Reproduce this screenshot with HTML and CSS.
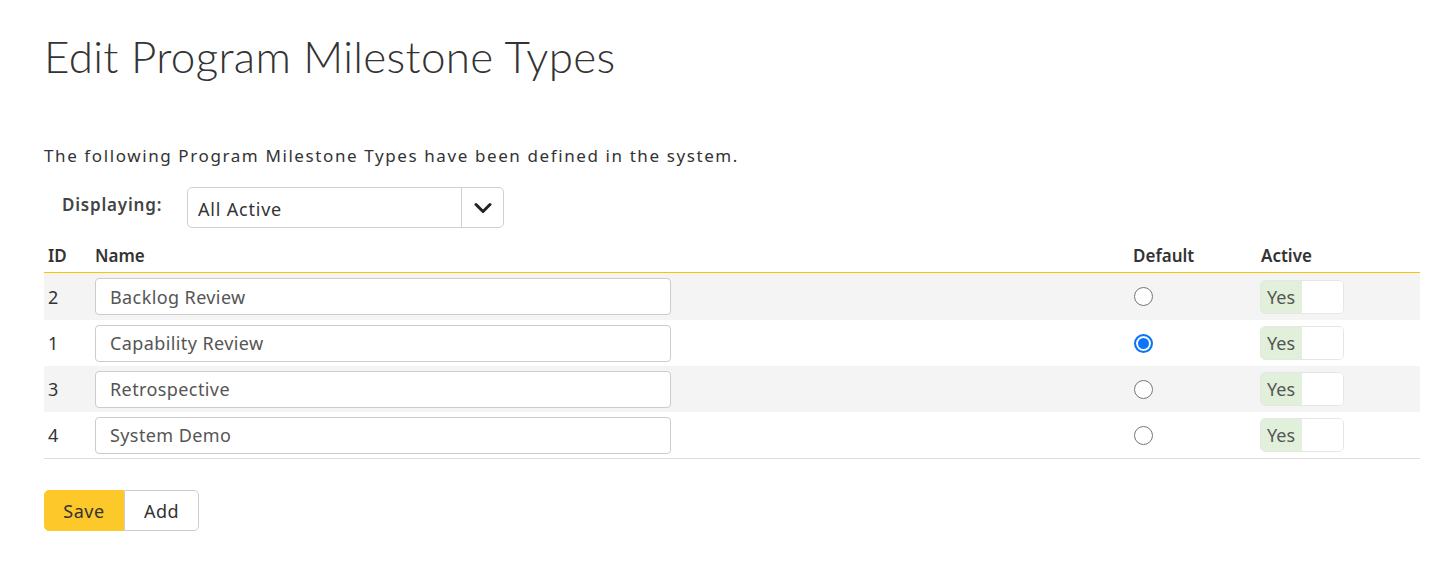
FILE: index.html
```html
<!DOCTYPE html>
<html>
<head>
<meta charset="utf-8">
<link rel="stylesheet" href="styles.css">
</head>
<body>
<div class="page">
  <h1 class="title">Edit Program Milestone Types</h1>
  <p class="intro">The following Program Milestone Types have been defined in the system.</p>
  <div class="filter">
    <label class="filter-label">Displaying:</label>
    <div class="select">
      <span class="select-value">All Active</span>
      <span class="select-btn">
        <svg width="18" height="12" viewBox="0 0 18 12"><path d="M2 2.5 L9 9.5 L16 2.5" fill="none" stroke="#222" stroke-width="3" stroke-linecap="round" stroke-linejoin="round"/></svg>
      </span>
    </div>
  </div>
  <table class="grid">
    <thead>
      <tr>
        <th class="c-id">ID</th>
        <th class="c-name">Name</th>
        <th class="c-def">Default</th>
        <th class="c-act">Active</th>
      </tr>
    </thead>
    <tbody>
      <tr class="alt">
        <td class="c-id">2</td>
        <td class="c-name"><input class="text" type="text" value="Backlog Review"></td>
        <td class="c-def"><span class="radio"></span></td>
        <td class="c-act"><span class="toggle"><span class="yes">Yes</span><span class="no"></span></span></td>
      </tr>
      <tr>
        <td class="c-id">1</td>
        <td class="c-name"><input class="text" type="text" value="Capability Review"></td>
        <td class="c-def"><span class="radio checked"></span></td>
        <td class="c-act"><span class="toggle"><span class="yes">Yes</span><span class="no"></span></span></td>
      </tr>
      <tr class="alt">
        <td class="c-id">3</td>
        <td class="c-name"><input class="text" type="text" value="Retrospective"></td>
        <td class="c-def"><span class="radio"></span></td>
        <td class="c-act"><span class="toggle"><span class="yes">Yes</span><span class="no"></span></span></td>
      </tr>
      <tr>
        <td class="c-id">4</td>
        <td class="c-name"><input class="text" type="text" value="System Demo"></td>
        <td class="c-def"><span class="radio"></span></td>
        <td class="c-act"><span class="toggle"><span class="yes">Yes</span><span class="no"></span></span></td>
      </tr>
    </tbody>
  </table>
  <div class="actions">
    <button class="btn btn-primary">Save</button><button class="btn">Add</button>
  </div>
</div>
</body>
</html>
```

FILE: styles.css
```css
* { box-sizing: border-box; }
html, body { margin: 0; padding: 0; background: #fff; }
body {
  font-family: "Noto Sans", "Open Sans", sans-serif;
  color: #333;
  font-size: 18px;
}
.page {
  padding: 28px 32px 0 44px;
}
.title {
  margin: 0;
  font-family: "Lato", "Liberation Sans", sans-serif;
  font-weight: 300;
  font-size: 44px;
  line-height: 56px;
  color: #333;
  letter-spacing: 0.3px;
}
.intro {
  margin: 60px 0 0 0;
  font-size: 17px;
  line-height: 24px;
  color: #333;
  letter-spacing: 1.6px;
}
.filter {
  display: flex;
  align-items: center;
  margin-top: 19px;
  padding-left: 18px;
}
.filter-label {
  font-size: 17px;
  font-weight: 600;
  color: #444;
  width: 125px;
  margin-top: -6px;
  letter-spacing: 0.8px;
}
.select {
  display: flex;
  width: 317px;
  height: 41px;
  border: 1px solid #d0d0d0;
  border-radius: 5px;
  align-items: stretch;
}
.select-value {
  flex: 1;
  padding: 9px 10px 0;
  font-size: 18px;
  color: #333;
  letter-spacing: 0.8px;
}
.select-btn {
  width: 42px;
  border-left: 1px solid #d0d0d0;
  display: flex;
  align-items: center;
  justify-content: center;
}
.grid {
  width: 1376px;
  border-collapse: separate;
  border-spacing: 0;
  margin-top: 10px;
}
.grid th {
  text-align: left;
  font-weight: 600;
  font-size: 17px;
  color: #333;
  height: 35px;
  padding: 0;
  border-bottom: 1px solid #f7c400;
  vertical-align: middle;
}
.grid td {
  height: 46px;
  padding: 0;
  vertical-align: middle;
  font-size: 18px;
  color: #333;
}
.grid tbody tr:first-child td { height: 47px; }
.grid tbody tr:last-child td { border-bottom: 1px solid #ddd; height: 47px; }
.grid tr.alt td { background: #f4f4f4; }
.c-id { width: 51px; padding-left: 4px !important; }
.c-name { width: 1038px; }
.c-def { width: 128px; }
.text {
  width: 576px;
  height: 37px;
  border: 1px solid #ccc;
  border-radius: 4px;
  padding: 0 14px;
  font-family: "Noto Sans", "Open Sans", sans-serif;
  font-size: 18px;
  color: #555;
  background: #fff;
  letter-spacing: 0.4px;
}
.radio {
  display: block;
  width: 19px;
  height: 19px;
  border: 1.5px solid #767676;
  border-radius: 50%;
  margin-left: 1px;
  background: #fff;
}
.radio.checked {
  border: 2px solid #0b75f5;
  box-shadow: inset 0 0 0 2px #fff, inset 0 0 0 10px #0b75f5;
}
.toggle {
  display: flex;
  width: 84px;
  height: 34px;
  border: 1px solid #e6e6e6;
  border-radius: 5px;
  overflow: hidden;
  margin-left: -1px;
}
.toggle .yes {
  width: 41px;
  background: #e0f0da;
  color: #555;
  font-size: 18px;
  line-height: 32px;
  padding-left: 6px;
}
.toggle .no { flex: 1; background: #fff; }
.actions {
  margin-top: 31px;
  display: flex;
}
.btn {
  font-family: "Noto Sans", "Open Sans", sans-serif;
  font-size: 18px;
  color: #333;
  height: 41px;
  padding: 0 18px;
  border: 1px solid #ccc;
  background: #fff;
  border-radius: 0 5px 5px 0;
  width: 75px;
  letter-spacing: 0.5px;
}
.btn-primary {
  background: #fcc82a;
  border-color: #fcc82a;
  border-radius: 5px 0 0 5px;
  width: 80px;
}
```
